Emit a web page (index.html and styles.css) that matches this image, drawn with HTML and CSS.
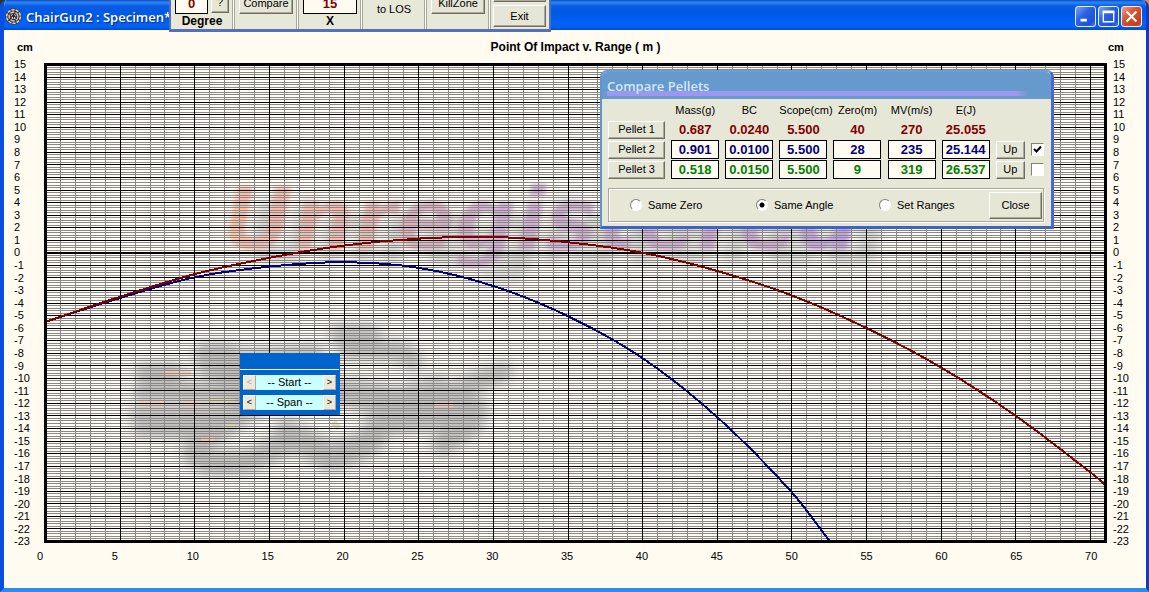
FILE: index.html
```html
<!DOCTYPE html>
<html lang="en">
<head>
<meta charset="utf-8">
<title>ChairGun2 : Specimen*</title>
<link rel="stylesheet" href="styles.css">
</head>
<body>
<div class="window">
  <header class="titlebar">
    <svg class="app-icon" viewBox="0 0 16 16" aria-hidden="true">
      <circle cx="8" cy="8" r="7.6" fill="#3c3434"/>
      <circle cx="8" cy="8" r="6.4" fill="none" stroke="#d8d0cc" stroke-width="1.5" stroke-dasharray="3 1"/>
      <circle cx="8" cy="8" r="4.1" fill="none" stroke="#c9c0bc" stroke-width="1.5" stroke-dasharray="4 1.2"/>
      <circle cx="8" cy="8" r="2.4" fill="#e6dedb"/>
      <path d="M5 10l3-4 3 4M8 6v4" fill="none" stroke="#4a2020" stroke-width="1"/>
    </svg>
    <h1 class="title">ChairGun2 : Specimen*</h1>
    <div class="controls">
      <button class="ctl" aria-label="Minimize"><svg viewBox="0 0 21 21"><path d="M5 14.500h7" stroke="#fff" stroke-width="3"/></svg></button>
      <button class="ctl" aria-label="Maximize"><svg viewBox="0 0 21 21"><path d="M4 5.500h13" stroke="#fff" stroke-width="3"/><path d="M4.750 5v11.250h11.500V5" fill="none" stroke="#fff" stroke-width="1.500"/></svg></button>
      <button class="ctl ctl-close" aria-label="Close window"><svg viewBox="0 0 21 21"><path d="M5 5l11 11m0-11l-11 11" stroke="#fff" stroke-width="2.400"/></svg></button>
    </div>
  </header>

  <main class="client">
    <div class="unit">cm</div>
    <h2 class="chart-title">Point Of Impact v. Range ( m )</h2>
    <div class="unit unit-right">cm</div>
    <div class="y-axis" data-axis="y"></div>
    <div class="plot">
      <svg class="watermark" viewBox="0 0 1057 474" preserveAspectRatio="none" aria-hidden="true">
        <defs>
          <linearGradient id="ink" gradientUnits="userSpaceOnUse" x1="180" y1="0" x2="820" y2="0">
            <stop offset="0" stop-color="#ffc8a0"/>
            <stop offset=".03" stop-color="#fbbcaa"/>
            <stop offset=".2" stop-color="#f4bab2"/>
            <stop offset=".3" stop-color="#dcb0c0"/>
            <stop offset=".42" stop-color="#d2b0d6"/>
            <stop offset=".85" stop-color="#d0aad8"/>
            <stop offset="1" stop-color="#c09cf6"/>
          </linearGradient>
          <filter id="soft" x="-10%" y="-30%" width="120%" height="170%">
            <feGaussianBlur in="SourceGraphic" stdDeviation="2" result="ink"/>
            <feOffset in="SourceAlpha" dx="26" dy="14"/>
            <feGaussianBlur stdDeviation="7" result="far"/>
            <feFlood flood-color="#8c9494" flood-opacity=".45"/>
            <feComposite in2="far" operator="in" result="shade"/>
            <feMerge><feMergeNode in="shade"/><feMergeNode in="ink"/></feMerge>
          </filter>
          <filter id="haze" x="-10%" y="-30%" width="120%" height="160%"><feGaussianBlur stdDeviation="6"/></filter>
        </defs>
        <text class="mark" x="176" y="183" fill="url(#ink)" filter="url(#soft)">Unregistered</text>
        <g class="smoke" filter="url(#haze)">
          <path d="M98 306h30M96 326h84M92 350h90M96 362h60" stroke-width="20"/>
          <path d="M160 290h20M165 300L265 292M182 324l50-22" stroke-width="28"/>
          <path d="M292 268h32M300 284h52l14 10" stroke-width="20"/>
          <path d="M160 370l60-40 90-4 70 14" stroke-width="26"/>
          <path d="M146 386l14 12 40-2 50-24" stroke-width="24"/>
          <path d="M240 366l44 26 36-14 30-42 40-12" stroke-width="28"/>
          <path d="M300 330l60 20 60-30 36-14" stroke-width="20"/>
          <path d="M350 356l50-6 26 6-30 22M400 330l30 14" stroke-width="24"/>
        </g>
        <g class="tint">
          <path d="M116 307h28M92 337h26M136 338h18M154 373h14M386 339h20" stroke="#ffc8b8" stroke-width="5"/>
          <path d="M160 335h28M176 362l12-4M286 356l6 6" stroke="#ddd8a8" stroke-width="6"/>
        </g>
      </svg>
      <svg class="grid" id="grid" role="img" aria-label="Pellet trajectories, centimetres against metres"></svg>
    </div>
    <div class="y-axis y-axis-right" data-axis="y"></div>
    <div class="x-axis" data-axis="x"></div>
  </main>

  <section class="toolbar" aria-label="Tools">
    <div class="tool-group">
      <div class="tool-row">
        <input class="num" id="degree" value="0">
        <button class="btn btn-help">?</button>
      </div>
      <label class="tool-label" for="degree">Degree</label>
    </div>
    <div class="tool-group"><button class="btn tool-btn">Compare</button></div>
    <div class="tool-group">
      <input class="num" id="zoom" value="15">
      <label class="tool-label" for="zoom">X</label>
    </div>
    <div class="tool-group"><span class="tool-text">to LOS</span></div>
    <div class="tool-group"><button class="btn tool-btn">KillZone</button></div>
    <div class="tool-group tool-group-end">
      <button class="btn tool-sliver" aria-label="More"></button>
      <button class="btn tool-exit">Exit</button>
    </div>
  </section>

  <section class="dialog" aria-labelledby="cmp">
    <h2 class="dialog-title" id="cmp">Compare Pellets</h2>
    <div class="dialog-body">
      <table class="pellets">
        <thead>
          <tr><td></td><th>Mass(g)</th><th>BC</th><th>Scope(cm)</th><th>Zero(m)</th><th>MV(m/s)</th><th>E(J)</th><td></td><td></td></tr>
        </thead>
        <tbody>
          <tr class="p1"><td><button class="btn pellet">Pellet 1</button></td><td>0.687</td><td>0.0240</td><td>5.500</td><td>40</td><td>270</td><td>25.055</td><td></td><td></td></tr>
          <tr class="p2"><td><button class="btn pellet">Pellet 2</button></td><td><input aria-label="Pellet 2 mass" value="0.901"></td><td><input aria-label="Pellet 2 BC" value="0.0100"></td><td><input aria-label="Pellet 2 scope" value="5.500"></td><td><input aria-label="Pellet 2 zero" value="28"></td><td><input aria-label="Pellet 2 velocity" value="235"></td><td><input aria-label="Pellet 2 energy" value="25.144"></td><td><button class="btn up">Up</button></td><td><input class="tick" type="checkbox" aria-label="Show pellet 2" checked></td></tr>
          <tr class="p3"><td><button class="btn pellet">Pellet 3</button></td><td><input aria-label="Pellet 3 mass" value="0.518"></td><td><input aria-label="Pellet 3 BC" value="0.0150"></td><td><input aria-label="Pellet 3 scope" value="5.500"></td><td><input aria-label="Pellet 3 zero" value="9"></td><td><input aria-label="Pellet 3 velocity" value="319"></td><td><input aria-label="Pellet 3 energy" value="26.537"></td><td><button class="btn up">Up</button></td><td><input class="tick" type="checkbox" aria-label="Show pellet 3"></td></tr>
        </tbody>
      </table>
      <div class="modes">
        <label class="mode"><input class="radio" type="radio" name="mode">Same Zero</label>
        <label class="mode"><input class="radio" type="radio" name="mode" checked>Same Angle</label>
        <label class="mode"><input class="radio" type="radio" name="mode">Set Ranges</label>
        <button class="btn close">Close</button>
      </div>
    </div>
  </section>

  <section class="palette" aria-label="Range">
    <div class="palette-bar"></div>
    <div class="stepper"><button class="step" disabled aria-label="Start down">&lt;</button><span>-- Start --</span><button class="step" aria-label="Start up">&gt;</button></div>
    <div class="stepper"><button class="step" aria-label="Span down">&lt;</button><span>-- Span --</span><button class="step" aria-label="Span up">&gt;</button></div>
  </section>
</div>
<script src="chart.js"></script>
</body>
</html>
```
FILE: styles.css
```css
* { box-sizing: border-box; }

body {
  margin: 0;
  background: linear-gradient(90deg, #34341c 50%, #e98a34 50%);
  color: #000;
  font: 11px/13px "Liberation Sans", Arial, sans-serif;
}

button, input { font: inherit; color: inherit; margin: 0; padding: 0; border-radius: 0; }
h1, h2 { margin: 0; }

.window {
  position: relative;
  display: flex;
  flex-direction: column;
  min-height: 100vh;
  overflow: hidden;
  border: solid #0a50e0;
  border-width: 0 3px 4px 4px;
  border-color: #0a50e0 #0a3cc8 #2a8cf0 #0a50e0;
  border-radius: 7px 7px 0 0;
  background: #fffbf0;
}

.titlebar {
  display: flex;
  align-items: center;
  gap: 4px;
  height: 30px;
  margin: 0 -3px 0 -4px;
  padding: 3px 7px 0 5px;
  background: linear-gradient(#0a48c0 0, #2a80f0 2px, #2a80f0 3px, #0a5ce4 6px, #0058e6 12px, #0062f8 24px, #0060f4 27px, #0048cc 30px);
}
.app-icon { width: 17px; height: 17px; }
.title {
  flex: 1;
  color: #fff;
  font: 600 13px/18px "Open Sans", sans-serif;
  text-shadow: 1px 1px 1px #0a2c80;
}
.controls { display: flex; gap: 2px; }
.ctl {
  width: 21px;
  height: 21px;
  border: 1px solid #e8f0ff;
  border-radius: 3px;
  background: linear-gradient(135deg, #7ea4f4, #2c62e4 40%, #1c50dc 80%, #4478f0);
}
.ctl svg { display: block; width: 19px; height: 19px; }
.ctl-close { background: linear-gradient(135deg, #f0a084, #dc5430 40%, #c83c18 85%, #e06848); }

.client {
  flex: 1;
  display: grid;
  grid-template: 33px 1fr 45px / 40px 1fr 39px;
}
.unit, .chart-title { font-size: 12px; font-weight: bold; line-height: 14px; padding-top: 10px; }
.unit { font-size: 11px; padding-left: 13px; }
.unit-right { padding-left: 1px; }
.chart-title { text-align: center; }

.y-axis { display: grid; grid-auto-rows: 1fr; margin: -5px 0; padding-left: 10px; line-height: 12px; min-height: 0; }
.y-axis span { height: 12px; }
.y-axis-right { padding-left: 6px; }
.x-axis { grid-column: 2; display: grid; grid-template-columns: repeat(14, 5fr) 1fr; margin: 0 7px 0 -7px; padding-top: 7px; }
.x-axis span { width: 0; min-width: 0; }

.plot { position: relative; border: 3px solid #000; min-width: 0; background: #fffdf6; }
.watermark, .grid { position: absolute; inset: 0; width: 100%; height: 100%; }
.mark { font: italic bold 86px "DejaVu Sans", sans-serif; }
.smoke { fill: none; stroke: #77777c; stroke-linecap: round; stroke-linejoin: round; opacity: .45; }
.tint { fill: none; opacity: .7; }
.grid { shape-rendering: crispEdges; fill: none; }
.minor { stroke: #8c8886; }
.major { stroke: #000; }
.zero { stroke: #000; stroke-width: 2; }
.curve { stroke-width: 2; }
.curve-red { stroke: #800000; }
.curve-blue { stroke: #000080; }

.btn {
  border: 1px solid;
  border-color: #fff #6f6d62 #6f6d62 #fff;
  box-shadow: inset -1px -1px #aca899;
  background: #e6e6d6;
  line-height: 13px;
}

.toolbar {
  position: absolute;
  top: 0;
  left: 165px;
  display: flex;
  height: 32px;
  overflow: hidden;
  border: solid #5470bc;
  border-width: 0 2px 3px;
  background: #e8e8d8;
}
.tool-group {
  display: flex;
  flex-direction: column;
  align-items: center;
  width: 64px;
  margin-top: -8px;
  padding: 0 5px 0 4px;
  border-right: 1px solid #aca899;
  box-shadow: inset -1px 0 #fff, inset -2px 0 #aca899;
}
.tool-group-end { width: 58px; border-right: 0; box-shadow: none; }
.tool-row { display: flex; gap: 3px; width: 100%; }
.num {
  width: 100%;
  min-width: 0;
  height: 22px;
  flex: 0 1 auto;
  border: 1px solid #000;
  background: #fffbf0;
  color: #800000;
  font-weight: bold;
  font-size: 13px;
  text-align: center;
}
.btn-help { flex: 0 0 18px; height: 21px; }
.tool-label { font-size: 12px; font-weight: bold; line-height: 15px; }
.tool-btn { width: 54px; height: 22px; }
.tool-text { padding-top: 11px; }
.tool-sliver { width: 53px; height: 10px; flex: none; margin-bottom: 3px; }
.tool-exit { width: 53px; height: 22px; flex: none; }

.dialog {
  position: absolute;
  top: 70px;
  left: 596px;
  width: 454px;
  border: solid #4668cc;
  border-width: 2px 3px 3px 2px;
  border-color: #6c9ce0 #4a68d0 #3c64c8 #5c94d4;
  border-radius: 7px 7px 0 0;
  background: #e7e7d7;
}
.dialog-title {
  height: 27px;
  padding: 5px 5px 0;
  border-radius: 5px 5px 0 0;
  background:
    linear-gradient(90deg, #9c98f0 97%, transparent) 5px 19px / 422px 5px no-repeat,
    #6699cc;
  color: #d4e8fc;
  font: 600 13px/18px "Open Sans", sans-serif;
}
.dialog-body { padding: 1px 7px 4px 6px; }
.pellets { border-spacing: 6px 1px; margin: 0 -6px; table-layout: fixed; width: 448px; }
.pellets td, .pellets th { padding: 0; height: 19px; text-align: center; white-space: nowrap; vertical-align: middle; width: 48px; }
.pellets thead td, .pellets th { height: 18px; font-weight: normal; }
.pellets td:first-child { width: 57px; }
.pellets td:nth-child(8) { width: 29px; }
.pellets td:nth-child(9) { width: 13px; }
.pellets tbody { font-weight: bold; font-size: 13px; }
.pellets input:not(.tick) { display: block; width: 48px; height: 19px; border: 1px solid #000; background: #fffbf0; text-align: center; }
.p1 { color: #800000; }
.p2 { color: #000080; }
.p3 { color: #008000; }
.pellets .btn { display: block; width: 100%; height: 18px; color: #000; font-size: 11px; font-weight: normal; }

.tick, .radio {
  appearance: none;
  display: block;
  width: 13px;
  height: 13px;
  border: 1px solid;
  border-color: #808078 #fff #fff #808078;
  background: #fff;
}
.tick:checked {
  background: #fff url("data:image/svg+xml,%3Csvg xmlns='http://www.w3.org/2000/svg' viewBox='0 0 11 11'%3E%3Cpath d='M2 5l2.500 2.500L9 2.500' fill='none' stroke='%23000' stroke-width='2'/%3E%3C/svg%3E");
}
.radio { width: 12px; height: 12px; border-radius: 50%; }
.radio:checked { background: radial-gradient(circle, #000 2px, #fff 3px); }

.modes {
  display: grid;
  grid-template-columns: 126px 123px 1fr 53px;
  align-items: center;
  height: 34px;
  margin-top: 8px;
  padding: 0 1px 0 21px;
  border: 1px solid #aca899;
  box-shadow: 1px 1px #fff, inset 1px 1px #fff;
}
.mode { display: flex; align-items: center; gap: 6px; }
.close { height: 27px; }

.palette {
  position: absolute;
  top: 353px;
  left: 236px;
  display: grid;
  gap: 5px;
  width: 100px;
  padding: 0 4px 5px 3px;
  background: #0064cc;
}
.palette-bar { height: 17px; margin: 0 -3px 0 -3px; border-bottom: 1px solid #fff; }
.stepper { display: flex; height: 15px; background: #ccffff; }
.stepper span { flex: 1; text-align: center; line-height: 14px; }
.step { width: 13px; border: 1px solid; border-color: #fff #aca899 #aca899 #fff; background: #ece9d8; font-size: 9px; line-height: 11px; }
.step:disabled { color: #aca899; }
```
FILE: chart.js
```js
const SVG = "http://www.w3.org/2000/svg";
const X_MAX = 71;
const Y_MAX = 15;
const Y_MIN = -23;

const curves = [
  { name: "blue", points: [[0, -5.5], [5, -3.6], [10, -1.95], [15, -1.1], [20, -0.75], [25, -1.2], [30, -2.65], [35, -5.05], [40, -8.4], [45, -13.1], [50, -19.1], [52.6, -23.1]] },
  { name: "red", points: [[0, -5.5], [5, -3.5], [10, -1.7], [15, -0.4], [20, 0.58], [25, 1.13], [30, 1.26], [35, 0.84], [40, 0], [45, -1.45], [50, -3.4], [55, -6], [60, -9.15], [65, -13], [70, -17.5], [71, -18.5]] }
];

function addLabels() {
  for (const axis of document.querySelectorAll("[data-axis]")) {
    const vertical = axis.dataset.axis === "y";
    const values = vertical
      ? Array.from({ length: Y_MAX - Y_MIN + 1 }, (_, i) => Y_MAX - i)
      : Array.from({ length: 15 }, (_, i) => i * 5);
    for (const value of values) {
      const label = document.createElement("span");
      label.textContent = value;
      axis.append(label);
    }
  }
}

function addPath(svg, className, d) {
  const path = document.createElementNS(SVG, "path");
  path.setAttribute("class", className);
  path.setAttribute("d", d);
  svg.append(path);
}

function smooth(points) {
  let d = `M${points[0]}`;
  for (let i = 0; i < points.length - 1; i++) {
    const a = points[i], b = points[i + 1];
    const before = points[i - 1] || a, after = points[i + 2] || b;
    const slope = (p, q) => (q[1] - p[1]) / (q[0] - p[0]);
    const third = (b[0] - a[0]) / 3;
    d += `C${a[0] + third},${a[1] + third * slope(before, b)} ${b[0] - third},${b[1] - third * slope(a, after)} ${b}`;
  }
  return d;
}

function draw() {
  const svg = document.getElementById("grid");
  const w = svg.clientWidth, h = svg.clientHeight;
  const x = v => v * (w + 3) / X_MAX - 1.5;
  const y = v => (Y_MAX - v) * (h + 3) / (Y_MAX - Y_MIN) - 1.5;
  const snap = v => Math.floor(v) + 0.5;
  let minor = "", major = "";
  svg.replaceChildren();
  for (let m = 1; m < X_MAX; m++) {
    const line = `M${snap(x(m))} 0V${h}`;
    if (m % 5) minor += line; else major += line;
  }
  for (let i = 1; i < (Y_MAX - Y_MIN) * 5; i++) {
    const line = `M0 ${snap(y(Y_MAX - i / 5))}H${w}`;
    if (i % 5) minor += line; else major += line;
  }
  addPath(svg, "minor", minor);
  addPath(svg, "major", major);
  addPath(svg, "zero", `M0 ${Math.round(y(0))}H${w}`);
  for (const curve of curves) {
    addPath(svg, `curve curve-${curve.name}`, smooth(curve.points.map(([r, v]) => [x(r), y(v)])));
  }
}

addLabels();
draw();
window.addEventListener("resize", draw);
```
